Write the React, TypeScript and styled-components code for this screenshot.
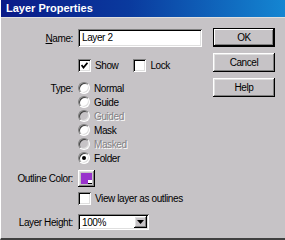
import React from 'react';
import styled, { createGlobalStyle, css } from 'styled-components';

const FACE = '#c6c3c6';

const GlobalStyle = createGlobalStyle`
  html, body {
    margin: 0;
    padding: 0;
    background: ${FACE};
  }
  body {
    font-family: "Liberation Sans", Arial, sans-serif;
    font-size: 10px;
    letter-spacing: -0.4px;
    color: #000;
  }
`;

const raised = css`
  box-shadow: inset -1px -1px #000, inset 1px 1px #fff, inset -2px -2px #808080,
    inset 2px 2px #dfdfdf;
`;

const sunken = css`
  box-shadow: inset 1px 1px #808080, inset -1px -1px #fff, inset 2px 2px #000,
    inset -2px -2px #dfdfdf;
`;

const TYPES = [
  { label: 'Normal' },
  { label: 'Guide' },
  { label: 'Guided', disabled: true },
  { label: 'Mask' },
  { label: 'Masked', disabled: true },
  { label: 'Folder', checked: true },
];

export default function App() {
  return (
    <>
      <GlobalStyle />
      <Window>
        <TitleBar>Layer Properties</TitleBar>
        <Body>
          <Form>
            <Row>
              <Label>
                <u>N</u>ame:
              </Label>
              <TextField>Layer 2</TextField>
            </Row>

            <Row $top={12}>
              <Label />
              <CheckBox checked />
              <Caption>Show</Caption>
              <Spacer $w={15} />
              <CheckBox />
              <Caption>Lock</Caption>
            </Row>

            <TypeList>
              {TYPES.map((t, i) => (
                <Row key={t.label} $h={14}>
                  <Label>{i === 0 ? 'Type:' : ''}</Label>
                  <Radio $disabled={t.disabled} $checked={t.checked} />
                  <Caption $disabled={t.disabled}>{t.label}</Caption>
                </Row>
              ))}
            </TypeList>

            <Row $top={5}>
              <Label>Outline Color:</Label>
              <Swatch>
                <SwatchFill />
                <SwatchNotch />
              </Swatch>
            </Row>

            <Row $top={5}>
              <Label />
              <CheckBox />
              <Caption>View layer as outlines</Caption>
            </Row>

            <Row $top={9}>
              <Label>Layer Height:</Label>
              <Combo>
                <ComboText>100%</ComboText>
                <ComboButton>
                  <svg width="7" height="4" viewBox="0 0 7 4">
                    <polygon points="0,0 7,0 3.5,4" fill="#000" />
                  </svg>
                </ComboButton>
              </Combo>
            </Row>
          </Form>

          <Buttons>
            <Button $default>OK</Button>
            <Button>Cancel</Button>
            <Button>Help</Button>
          </Buttons>
        </Body>
      </Window>
    </>
  );
}

function CheckBox({ checked }: { checked?: boolean }) {
  return (
    <Box>
      {checked && (
        <svg width="7" height="7" viewBox="0 0 7 7">
          <polyline
            points="0.5,3 2.5,5.5 6.5,0.8"
            fill="none"
            stroke="#000"
            strokeWidth="1.8"
          />
        </svg>
      )}
    </Box>
  );
}

const Window = styled.div`
  width: 285px;
  height: 240px;
  box-sizing: border-box;
  background: ${FACE};
  border-left: 1px solid #fff;
  border-bottom: 2px solid #404040;
  display: flex;
  flex-direction: column;
`;

const TitleBar = styled.div`
  height: 17px;
  flex-shrink: 0;
  padding-left: 5px;
  background: linear-gradient(to right, #0a1a88 0%, #0a3a9e 45%, #1486d2 100%);
  color: #fff;
  font-weight: bold;
  font-size: 11px;
  letter-spacing: 0;
  line-height: 17px;
  border-bottom: 1px solid #dfdfdf;
`;

const Body = styled.div`
  flex: 1;
  display: flex;
`;

const Form = styled.div`
  width: 212px;
  padding-top: 11px;
  display: flex;
  flex-direction: column;
`;

const Row = styled.div<{ $top?: number; $h?: number }>`
  display: flex;
  align-items: center;
  margin-top: ${p => p.$top ?? 0}px;
  ${p => p.$h && `height: ${p.$h}px;`}
`;

const TypeList = styled.div`
  margin-top: 9px;
  display: flex;
  flex-direction: column;
`;

const Label = styled.div`
  width: 72px;
  margin-right: 5px;
  text-align: right;
  white-space: nowrap;
`;

const Caption = styled.span<{ $disabled?: boolean }>`
  margin-left: 4px;
  white-space: nowrap;
  ${p =>
    p.$disabled &&
    css`
      color: #848284;
      text-shadow: 1px 1px #fff;
    `}
`;

const Spacer = styled.span<{ $w: number }>`
  width: ${p => p.$w}px;
`;

const TextField = styled.div`
  width: 124px;
  height: 18px;
  box-sizing: border-box;
  padding: 0 4px;
  line-height: 18px;
  background: #fff;
  ${sunken};
`;

const Box = styled.span`
  width: 13px;
  height: 13px;
  box-sizing: border-box;
  display: inline-flex;
  align-items: center;
  justify-content: center;
  background: #fff;
  ${sunken};
`;

const Radio = styled.span<{ $disabled?: boolean; $checked?: boolean }>`
  position: relative;
  width: 12px;
  height: 12px;
  box-sizing: border-box;
  border-radius: 50%;
  background: ${p => (p.$disabled ? FACE : '#fff')};
  border: 1px solid;
  border-color: #808080 #fff #fff #808080;
  box-shadow: inset 1px 1px #404040, inset -1px -1px #dfdfdf;

  ${p =>
    p.$checked &&
    css`
      &::after {
        content: '';
        position: absolute;
        left: 3px;
        top: 3px;
        width: 4px;
        height: 4px;
        border-radius: 50%;
        background: #000;
      }
    `}
`;

const Swatch = styled.span`
  position: relative;
  width: 17px;
  height: 17px;
  box-sizing: border-box;
  padding: 3px;
  background: ${FACE};
  ${raised};
`;

const SwatchFill = styled.span`
  display: block;
  width: 11px;
  height: 11px;
  background: #9933cc;
`;

const SwatchNotch = styled.span`
  position: absolute;
  right: 3px;
  bottom: 3px;
  width: 4px;
  height: 3px;
  background: #fff;
  border-bottom: 1px solid #000;
`;

const Combo = styled.div`
  width: 71px;
  height: 16px;
  box-sizing: border-box;
  padding: 2px;
  display: flex;
  align-items: center;
  background: #fff;
  ${sunken};
`;

const ComboText = styled.span`
  flex: 1;
  padding-left: 2px;
`;

const ComboButton = styled.span`
  width: 13px;
  height: 12px;
  box-sizing: border-box;
  display: flex;
  align-items: center;
  justify-content: center;
  background: ${FACE};
  ${raised};
`;

const Buttons = styled.div`
  padding-top: 10px;
  display: flex;
  flex-direction: column;
  gap: 6px;
`;

const Button = styled.div<{ $default?: boolean }>`
  width: 62px;
  height: 19px;
  box-sizing: border-box;
  display: flex;
  align-items: center;
  justify-content: center;
  background: ${FACE};
  ${raised};

  ${p =>
    p.$default &&
    css`
      box-shadow: inset 0 0 0 1px #000, inset -2px -2px #000, inset 2px 2px #fff,
        inset -3px -3px #808080;
    `}
`;
